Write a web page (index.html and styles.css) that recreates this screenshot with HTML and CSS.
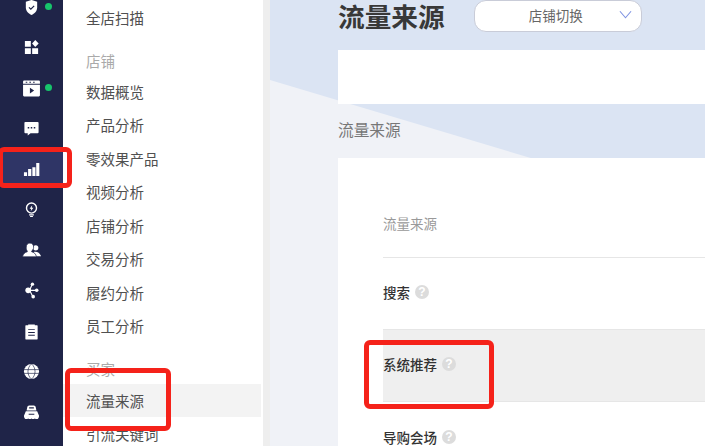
FILE: index.html
```html
<!DOCTYPE html>
<html lang="zh">
<head>
<meta charset="utf-8">
<title>流量来源</title>
<link rel="stylesheet" href="styles.css">
</head>
<body>
<div class="app">
  <nav class="rail">
    <div class="rail-item"><svg class="ico" viewBox="0 0 18 18"><path fill="#fff" d="M9 1l6 2v6c0 4-3 6.500-6 8-3-1.500-6-4-6-8V3z"/><path fill="none" stroke="#1f2448" stroke-width="1.300" d="M6.300 8.800l2 2 3.500-3.500"/></svg><i class="dot"></i></div>
    <div class="rail-item"><svg class="ico" viewBox="0 0 18 18"><path fill="#fff" d="M2 2h6.300v6.300H2zM2 9.700h6.300V16H2zM9.700 9.700H16V16H9.700zM13 1l3.600 3.800L13 8.500 9.600 4.800z"/></svg></div>
    <div class="rail-item"><svg class="ico ico-lg" viewBox="0 0 18 18"><path fill="#fff" d="M1 2.500a1 1 0 011-1h14a1 1 0 011 1v2H1zM1 5.500h16v10a1 1 0 01-1 1H2a1 1 0 01-1-1z"/><path fill="#1f2448" d="M7.500 8.200l4 2.800-4 2.800zM3.500 2.600h1.500v1H3.500zM7 2.600h1.500v1H7zM10.500 2.600H12v1h-1.500z"/></svg><i class="dot"></i></div>
    <div class="rail-item"><svg class="ico" viewBox="0 0 18 18"><path fill="#fff" d="M2.500 2h13a1 1 0 011 1v10a1 1 0 01-1 1H8l-3 2.500V14H2.500a1 1 0 01-1-1V3a1 1 0 011-1z"/><path fill="#1f2448" d="M5 7.300h1.600v1.600H5zM8.200 7.300h1.600v1.600H8.200zM11.400 7.300H13v1.600h-1.600z"/></svg></div>
    <div class="rail-item active"><div class="rail-pill"><svg class="ico" viewBox="0 0 18 18"><path fill="#fff" d="M1 12h3.300v4H1zM5.400 8.500h3.400V16H5.400zM9.900 6.500h3.300V16H9.900zM14 2h3.300v14H14z"/></svg></div></div>
    <div class="rail-item"><svg class="ico" viewBox="0 0 18 18"><circle cx="9" cy="7.500" r="5.300" fill="none" stroke="#fff" stroke-width="1.500"/><path fill="#fff" d="M9.800 4.500L7 8.200h1.700L8.200 10.800l2.800-3.700H9.300zM6.500 14h5v1.300h-5zM7.500 16h3v1h-3z"/></svg></div>
    <div class="rail-item"><svg class="ico ico-lg" viewBox="0 0 18 18"><circle cx="13" cy="6.500" r="2.500" fill="#fff"/><path fill="#fff" d="M11 10.500c3-.8 6 .8 7 4h-5.500z"/><path fill="#fff" stroke="#1f2448" stroke-width=".7" d="M7.500 2c2.200 0 3.500 1.700 3.500 3.800 0 1.500-.7 2.800-1.800 3.600v.8c2.200.5 4 2 4.500 4.800H.5c.5-2.800 2.300-4.300 4.500-4.800v-.8C4 8.600 4 7.300 4 5.800 4 3.700 5.300 2 7.500 2z"/></svg></div>
    <div class="rail-item"><svg class="ico" viewBox="0 0 18 18"><path fill="none" stroke="#fff" stroke-width="1.200" d="M10 1.800L7 8.800l3.500 6.700M7 8.800h7"/><circle cx="10" cy="2.300" r="1.800" fill="#fff"/><circle cx="5.500" cy="8.800" r="3" fill="#fff"/><circle cx="14.500" cy="8.800" r="1.900" fill="#fff"/><circle cx="10.800" cy="15.500" r="1.900" fill="#fff"/></svg></div>
    <div class="rail-item"><svg class="ico" viewBox="0 0 18 18"><path fill="#fff" d="M3 2.500h2.500V1.500h7v1H15a.5.500 0 01.5.500v14a.5.500 0 01-.5.500H3a.5.500 0 01-.5-.500V3a.5.500 0 01.5-.5z"/><path fill="#1f2448" d="M5.500 6.500h7v1h-7zM5.500 9.500h7v1h-7zM5.500 12.500h7v1h-7z"/></svg></div>
    <div class="rail-item"><svg class="ico" viewBox="0 0 18 18"><circle cx="9" cy="9" r="8" fill="#fff"/><path fill="none" stroke="#1f2448" stroke-width=".7" d="M1 7h16M1 11h16M9 1c-5 4-5 12 0 16M9 1c5 4 5 12 0 16"/></svg></div>
    <div class="rail-item"><svg class="ico" viewBox="0 0 18 18"><path fill="#fff" d="M6.500 1.500h5c1 0 1.800 .8 2 2l.7 3.300H3.800l.7-3.300c.2-1.200 1-2 2-2zM3 7.800h12l2 4.700c0 1.500-.7 3-1.500 3.300-1 .4-2 .2-3-.5-1 .8-2.500 .8-3.500 0-1 .8-2.500 .8-3.500 0-1 .7-2 .9-3 .5C1.700 15.500 1 14 1 12.500z"/><path fill="#1f2448" d="M6.500 3.500h5v1.300h-5zM6 10.300h6v1H6z"/></svg></div>
  </nav>

  <aside class="menu">
    <a class="menu-item">全店扫描</a>
    <div class="menu-group">店铺</div>
    <a class="menu-item">数据概览</a>
    <a class="menu-item">产品分析</a>
    <a class="menu-item">零效果产品</a>
    <a class="menu-item">视频分析</a>
    <a class="menu-item">店铺分析</a>
    <a class="menu-item">交易分析</a>
    <a class="menu-item">履约分析</a>
    <a class="menu-item">员工分析</a>
    <div class="menu-group menu-group-buyer">买家</div>
    <a class="menu-item selected">流量来源</a>
    <a class="menu-item">引流关键词</a>
  </aside>
  <div class="gutter"></div>

  <main class="main">
    <div class="main-wedge"></div>
    <div class="main-body">
      <header class="head">
        <h1 class="title">流量来源</h1>
        <div class="switch">
          <span class="switch-label">店铺切换</span>
          <svg class="chev" viewBox="0 0 14 9"><path fill="none" stroke="#7f93e2" stroke-width="1.200" d="M1 1l6 7 6-7"/></svg>
        </div>
      </header>
      <div class="banner"></div>
      <div class="section-label">流量来源</div>
      <section class="card">
        <div class="table-head">流量来源</div>
        <div class="row"><span class="row-name">搜索</span><span class="help">?</span></div>
        <div class="row row-hover"><span class="row-name">系统推荐</span><span class="help">?</span></div>
        <div class="row"><span class="row-name">导购会场</span><span class="help">?</span></div>
      </section>
    </div>
  </main>
</div>
<div class="mark mark-rail"></div>
<div class="mark mark-menu"></div>
<div class="mark mark-row"></div>
</body>
</html>
```

FILE: styles.css
```css
* { box-sizing: border-box; }
html, body { margin: 0; height: 100%; overflow: hidden; }
body {
  position: relative;
  font-family: "Noto Sans CJK SC", "Liberation Sans", sans-serif;
  color: #444;
  background: #fff;
}
.app { display: flex; height: 446px; overflow: hidden; }

.rail { width: 63px; flex: none; background: #1f2448; overflow: hidden; }
.rail-item {
  position: relative;
  height: 40.5px;
  display: flex;
  align-items: center;
  justify-content: center;
}
.rail-item:first-child { margin-top: -13px; }
.rail-pill {
  width: 100%;
  height: 36px;
  background: #2f3566;
  display: flex;
  align-items: center;
  justify-content: center;
}
.ico { width: 17px; height: 17px; display: block; }
.ico-lg { width: 19px; height: 19px; }
.dot {
  position: absolute;
  left: 45px;
  top: 50%;
  margin-top: -4px;
  width: 7px;
  height: 7px;
  border-radius: 50%;
  background: #17c46b;
}

.menu { width: 200px; flex: none; background: #fff; padding-top: 1px; overflow: hidden; }
.menu-item {
  display: block;
  height: 33.5px;
  line-height: 33.5px;
  padding-left: 23px;
  margin-right: 2px;
  font-size: 14.500px;
  color: #505050;
  white-space: nowrap;
}
.menu-item.selected { background: #f3f3f3; }
.menu-group {
  height: 25px;
  line-height: 25px;
  margin-top: 13px;
  margin-bottom: 2px;
  padding-left: 23px;
  font-size: 14.500px;
  color: #aaa;
}
.menu-group-buyer { margin-top: 13px; margin-bottom: 3px; }
.gutter { width: 7px; flex: none; background: #eeeeee; }

.main { position: relative; flex: 1; min-width: 0; background: #dbe4f3; overflow: hidden; }
.main-wedge {
  position: absolute;
  inset: 0;
  background: #f0f2f7;
  clip-path: polygon(0 80px, 435px 210px, 435px 446px, 0 446px);
}
.main-body { position: relative; padding-left: 68px; }
.head { height: 50px; display: flex; align-items: flex-start; }
.title {
  margin: 0 29px 0 0;
  font-size: 26.700px;
  line-height: 32px;
  font-weight: 700;
  color: #383838;
  white-space: nowrap;
}
.switch {
  width: 168px;
  height: 32px;
  flex: none;
  display: flex;
  align-items: center;
  background: #fff;
  border: 1px solid #c9ccd8;
  border-radius: 12px;
  position: relative;
}
.switch-label { font-size: 13.500px; color: #666; margin-left: 54px; line-height: 26px; margin-bottom: 2px; }
.chev { width: 13px; height: 9px; position: absolute; right: 9px; top: 9px; }
.banner { height: 54px; background: #fff; }
.section-label { height: 54px; line-height: 52px; font-size: 15.700px; color: #777; }
.card { background: #fff; padding: 0 0 0 45px; height: 400px; }
.table-head {
  height: 100px;
  padding-top: 49px;
  line-height: 32px;
  font-size: 13.500px;
  color: #999;
  border-bottom: 1px solid #e6e6e6;
}
.row {
  height: 72px;
  display: flex;
  align-items: center;
  gap: 5px;
  padding-bottom: 3px;
  font-size: 13.500px;
  border-bottom: 1px solid #e6e6e6;
}
.row:last-child { border-bottom: 0; padding-bottom: 2px; }
.row-hover { background: #efefef; }
.row-name { font-weight: 500; color: #333; }
.help {
  width: 14px;
  height: 14px;
  border-radius: 50%;
  background: #dcdcdc;
  color: #fff;
  font: 700 12px/14px "Liberation Sans", sans-serif;
  text-align: center;
}

.mark { position: absolute; border: 5px solid #f5221a; border-radius: 6px; pointer-events: none; }
.mark-rail { left: -2px; top: 147px; width: 74px; height: 41px; }
.mark-menu { left: 65px; top: 368px; width: 106px; height: 63px; }
.mark-row { left: 364px; top: 340px; width: 130px; height: 69px; }
```
